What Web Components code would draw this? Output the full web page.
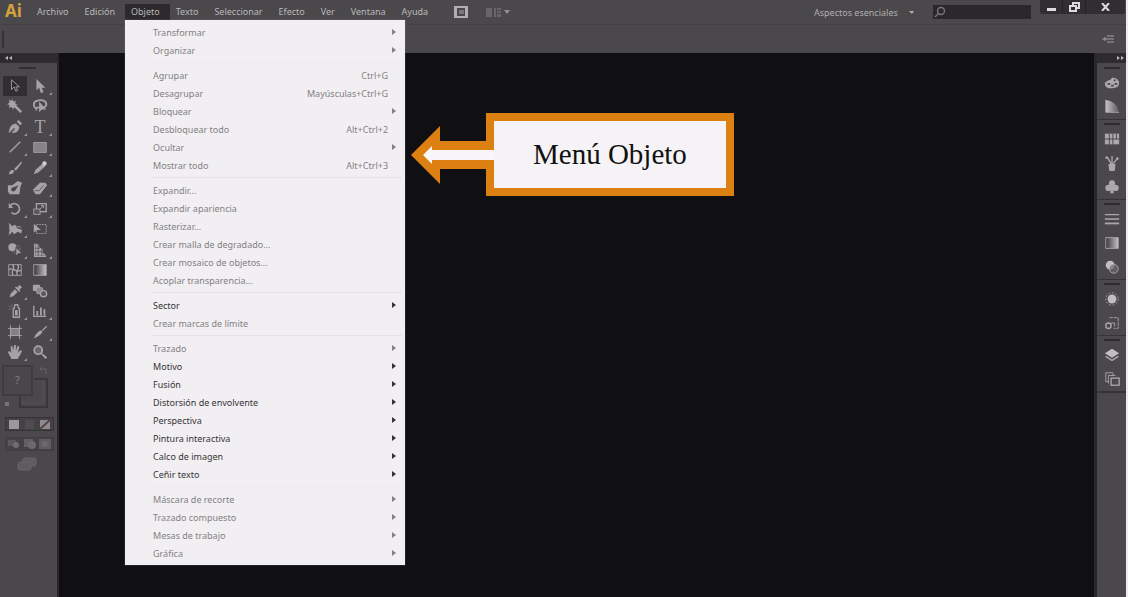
<!DOCTYPE html>
<html lang="es">
<head>
<meta charset="utf-8">
<title>Menú Objeto</title>
<style>
  html, body { margin: 0; }
  body {
    --bar: #4a484b; --bar-dark: #2d2b2e; --ink: #bbb9bc; --icon: #a5a3a6; --canvas: #100f12;
    --menu: #f1eff2; --accent: #dc8011;
    font-family: "Noto Sans", "Open Sans", sans-serif; font-size: 9px; background: var(--canvas); color: var(--ink);
  }
</style>
</head>
<body>
<app-shell>
  <menu-bar slot="menu">
    <menu-title>Archivo</menu-title>
    <menu-title>Edición</menu-title>
    <menu-title open>Objeto
      <menu-list slot="list">
        <menu-command disabled submenu>Transformar</menu-command>
        <menu-command disabled submenu>Organizar</menu-command>
        <menu-rule faint></menu-rule>
        <menu-command disabled shortcut="Ctrl+G">Agrupar</menu-command>
        <menu-command disabled shortcut="Mayúsculas+Ctrl+G">Desagrupar</menu-command>
        <menu-command disabled submenu>Bloquear</menu-command>
        <menu-command disabled shortcut="Alt+Ctrl+2">Desbloquear todo</menu-command>
        <menu-command disabled submenu>Ocultar</menu-command>
        <menu-command disabled shortcut="Alt+Ctrl+3">Mostrar todo</menu-command>
        <menu-rule></menu-rule>
        <menu-command disabled>Expandir...</menu-command>
        <menu-command disabled>Expandir apariencia</menu-command>
        <menu-command disabled>Rasterizar...</menu-command>
        <menu-command disabled>Crear malla de degradado...</menu-command>
        <menu-command disabled>Crear mosaico de objetos...</menu-command>
        <menu-command disabled>Acoplar transparencia...</menu-command>
        <menu-rule></menu-rule>
        <menu-command submenu>Sector</menu-command>
        <menu-command disabled>Crear marcas de límite</menu-command>
        <menu-rule></menu-rule>
        <menu-command disabled submenu>Trazado</menu-command>
        <menu-command submenu>Motivo</menu-command>
        <menu-command submenu>Fusión</menu-command>
        <menu-command submenu>Distorsión de envolvente</menu-command>
        <menu-command submenu>Perspectiva</menu-command>
        <menu-command submenu>Pintura interactiva</menu-command>
        <menu-command submenu>Calco de imagen</menu-command>
        <menu-command submenu>Ceñir texto</menu-command>
        <menu-rule faint></menu-rule>
        <menu-command disabled submenu>Máscara de recorte</menu-command>
        <menu-command disabled submenu>Trazado compuesto</menu-command>
        <menu-command disabled submenu>Mesas de trabajo</menu-command>
        <menu-command disabled submenu>Gráfica</menu-command>
      </menu-list>
    </menu-title>
    <menu-title>Texto</menu-title>
    <menu-title>Seleccionar</menu-title>
    <menu-title>Efecto</menu-title>
    <menu-title>Ver</menu-title>
    <menu-title>Ventana</menu-title>
    <menu-title>Ayuda</menu-title>
  </menu-bar>
  <control-bar slot="control"></control-bar>
  <tool-palette slot="tools"></tool-palette>
  <note-arrow>Menú Objeto</note-arrow>
  <panel-dock slot="panels"></panel-dock>
</app-shell>

<script>
const define = (name, html) => customElements.define(name, class extends HTMLElement {
  constructor() {
    super();
    this.attachShadow({ mode: "open" });
  }
  connectedCallback() {
    if (this.shadowRoot.firstChild) return;
    const t = document.createElement("template");
    t.innerHTML = "<style>*{box-sizing:border-box}button{font:inherit;color:inherit;background:none;border:0;padding:0;margin:0}svg{display:block}</style>" + (typeof html === "function" ? html(this) : html);
    this.shadowRoot.append(t.content.cloneNode(true));
  }
});

/* Glyphs on an 18 by 18 grid; fill and stroke come from the host colour. */
const S = 'fill="none" stroke="currentColor"';
const icons = {
  select: `<path d="M5 2v11l3-3 2 5 2-1-2-4h4z" fill="#29272a" stroke="currentColor"/>`,
  direct: `<path d="M5 1v13l3-3 2 6 3-1-2-5h4z"/>`,
  wand: `<path d="M6 1l1 3 3-1-1 3 3 1-2 1 7 7-2 2-7-7-1 3-2-3-3 1 1-3-3-1 3-2-1-3 3 1z"/>`,
  lasso: `<path d="M5 12C1 10 1 4 6 3c6-2 11 1 10 5-1 3-5 4-8 3-2-1-4 0-3 3" ${S} stroke-width="2"/><path d="M8 4v12l3-3h5z"/>`,
  pen: `<path d="M2 16c1-5 1-8 5-10l3-1 4 4-1 3c-2 4-5 3-8 4l4-5-1-1z"/><path d="M11 3l2-2 4 4-2 2z"/>`,
  line: `<path d="M3 15L15 3" ${S} stroke-width="1.5"/>`,
  rect: `<rect x="2" y="4" width="14" height="11" fill="#858386" stroke="currentColor"/>`,
  brush: `<path d="M2 16c1-4 3-6 6-4 0 3-3 4-6 4zM8 10l8-8 1 1-7 9z"/>`,
  pencil: `<path d="M2 16l2-5 8-7 3 3-8 7z"/><circle cx="14" cy="4" r="2.5" fill="#d0ced1"/>`,
  blob: `<path d="M1 6h5l6-5 5 2-2 5-1 8H3l-2-3zm4 3c-1 3 1 5 4 3l4-6z" fill-rule="evenodd"/>`,
  eraser: `<path d="M1 11L9 3h6l2 3-8 10H4z"/><path d="M3 12h5l5-6" fill="none" stroke="#59575a"/>`,
  rotate: `<path d="M4 5c3-4 10-2 10 4 0 5-6 7-9 4" ${S} stroke-width="1.8" /><path d="M2 2v6h5z"/>`,
  scale: `<rect x="5" y="3" width="11" height="9" ${S} stroke-width="1.5"/><rect x="2" y="9" width="7" height="6" fill="#59575a" stroke="currentColor"/><path d="M8 10l5-5v3M13 5h-3" ${S}/>`,
  width: `<path d="M2 2l4 4 3-2 2 4 6 2-1 4-4-2-4 3-2-3-4 4 1-7z"/><path d="M2 8c5 4 7-4 14-1" ${S}/>`,
  free: `<rect x="5" y="4" width="11" height="10" ${S} stroke-dasharray="2 1"/><path d="M2 3v10l4-3h4z"/>`,
  builder: `<circle cx="6" cy="6" r="4.5"/><circle cx="10" cy="8" r="4.5" ${S} stroke-dasharray="1 1"/><path d="M10 6v10l3-3h4z" stroke="#4a484b"/>`,
  persp: `<path d="M3 2v14h13" ${S} stroke-width="1.5"/><path d="M4 2l4 1v3l4 2v4l4 3H4z"/><path d="M7 3v12M11 6v9M3 7h6M3 11h9" fill="none" stroke="#59575a"/>`,
  mesh: `<rect x="2" y="3" width="14" height="12" ${S}/><path d="M2 9c5-5 8 5 14 0M6 3c5 3-3 7 1 12M12 3c4 4-4 7 0 12" ${S} stroke-width="1.5"/>`,
  gradient: `<rect x="2" y="3" width="14" height="12" fill="url(#g)" stroke="currentColor"/>`,
  dropper: `<path d="M3 16l1-4 5-5 3 3-5 5zM9 5l1-1 2 1 2-3 3 3-3 2 1 2-1 1z"/>`,
  blend: `<rect x="1" y="2" width="8" height="7" rx="1"/><rect x="5" y="5" width="7" height="7" rx="2" fill="#8a888b" stroke="currentColor"/><circle cx="13" cy="12" r="3.5" fill="#59575a" stroke="currentColor" stroke-width="1.5"/>`,
  spray: `<path d="M8 6l1-4h3l1 4h1v10H7V6z" ${S} stroke-width="1.5"/><path d="M9 8h3v6H9zM2 3h1v1H2zM4 5h1v1H4zM5 2h1v1H5zM2 7h1v1H2z"/>`,
  graph: `<path d="M2 3v12h14" ${S} stroke-width="1.5"/><path d="M5 9h2v5H5zM9 5h2v9H9zM13 7h2v7h-2z"/>`,
  artboard: `<rect x="4" y="5" width="10" height="8" fill="#838184" stroke="currentColor"/><path d="M4 1v16M14 1v16M1 5h16M1 13h16" ${S}/>`,
  slice: `<path d="M2 16c2-5 5-8 8-9l2 2c-3 4-6 6-10 7z"/><path d="M11 7l5-5 1 1-5 5z"/>`,
  hand: `<path d="M5 17c-1-3-3-5-4-8l2-1 2 2-1-7 2-1 1 6 1-7h2v7l2-6 2 1-2 7 3-3 2 1c-2 4-3 6-5 9z"/>`,
  zoom: `<circle cx="7" cy="7" r="4.5" fill="#69676a" stroke="currentColor" stroke-width="2"/><path d="M11 10l6 5-2 2-5-6z"/>`,
  palette: `<path d="M1 10c0-4 6-3 8-7 4 0 8 2 8 6 0 5-5 6-9 6s-7-2-7-5z"/><path d="M4 10h3M8 12h3M12 10h3M11 6h2" fill="none" stroke="#454346" stroke-width="2"/>`,
  guide: `<path d="M2 1c8 1 14 6 15 14H2z" fill="url(#g2)"/><path d="M2 1v14h15" ${S}/>`,
  swatches: `<path d="M1 3h16v12H1z" /><path d="M1 9h16M6 3v12M10 3v12M14 3v6" fill="none" stroke="#454346"/>`,
  brushes: `<path d="M5 10h8l-1 8H6z"/><path d="M8 10L4 3M9 10V1M10 10l5-6" ${S} stroke-width="1.5"/><circle cx="3" cy="3" r="1.5"/><circle cx="15" cy="4" r="1.5"/>`,
  club: `<circle cx="9" cy="5" r="3.5"/><circle cx="5" cy="10" r="3.5"/><circle cx="13" cy="10" r="3.5"/><path d="M8 8h2l1 8H7z"/>`,
  stroke: `<path d="M1 4h16M1 9h16" ${S} stroke-width="1.5"/><path d="M1 14h16" ${S} stroke-width="2"/>`,
  transp: `<circle cx="7" cy="7" r="5" fill="#c0bec1"/><circle cx="11" cy="11" r="5" fill="#6c6a6d" fill-opacity=".7" stroke="currentColor"/>`,
  appear: `<circle cx="9" cy="9" r="5" fill="#c0bec1"/><circle cx="9" cy="9" r="7" ${S} stroke-dasharray="2 2"/>`,
  styles: `<path d="M6 3h10v12h-5" ${S} stroke-dasharray="4 1"/><circle cx="5" cy="12" r="3" ${S} stroke-width="1.5"/><path d="M8 9h4v4" ${S}/>`,
  layers: `<path d="M9 2l8 5-8 5-8-5z" fill="#c0bec1"/><path d="M3 10l6 4 6-4 2 1-8 5-8-5z"/>`,
  boards: `<path d="M5 12H2V2h8v3" ${S}/><rect x="8" y="8" width="9" height="8" ${S} stroke-width="1.5"/><path d="M5 14V5h8" ${S}/>`
};
const glyph = n => `<svg width="16" height="16" viewBox="0 0 18 18" fill="currentColor" aria-hidden="true"><defs><linearGradient id="g"><stop stop-color="#38363a"/><stop offset="1" stop-color="#c4c2c5"/></linearGradient><linearGradient id="g2"><stop stop-color="#c4c2c5"/><stop offset="1" stop-color="#5a585b"/></linearGradient></defs>${icons[n]}</svg>`;

define("app-shell", `<style>
  :host { display: flex; flex-direction: column; min-height: 100vh; border-right: 2px solid #eeecef; box-sizing: border-box; }
  .work { flex: 1; display: flex; }
  main { flex: 1; position: relative; background: var(--canvas); }
</style>
<slot name="menu"></slot><slot name="control"></slot>
<div class="work"><slot name="tools"></slot><main><slot></slot></main><slot name="panels"></slot></div>`);

define("menu-bar", `<style>
  :host { display: flex; align-items: flex-start; height: 24px; background: var(--bar); position: relative; z-index: 2; }
  .logo { width: 31px; padding-left: 5px; font-size: 17px; line-height: 22px; font-weight: 700; color: #d5a13a; }
  nav { display: flex; padding-top: 4px; }
  .extra { display: flex; align-items: center; gap: 18px; height: 24px; margin-left: 16px; }
  .arrange { display: flex; align-items: center; gap: 2px; color: #747275; }
  .right { display: flex; margin-left: auto; }
  .space { display: flex; align-items: center; height: 24px; gap: 6px; margin-right: 19px; }
  select { appearance: none; border: 0; background: none; font: inherit; color: #b0aeb1; padding: 0; width: 89px; }
  .search { display: flex; align-items: center; width: 98px; height: 14px; margin: 5px 9px 0 0; padding-left: 1px; background: #2a282b; color: #777578; }
  input { flex: 1; min-width: 0; height: 12px; border: 0; padding: 0 2px; background: none; font: inherit; color: inherit; outline: 0; }
  .win { display: flex; height: 14px; margin-right: 1px; background: #302e31; color: #dcdadd; border-radius: 0 0 2px 2px; }
  .win button { display: grid; place-items: center; width: 23px; border-right: 1px solid #232124; }
  .win button:last-child { width: 39px; border: 0; }
</style>
<div class="logo">Ai</div>
<nav><slot></slot></nav>
<div class="extra">
  <button aria-label="Bridge"><svg width="14" height="12"><path d="M0 0h14v12H0zM3 2v8h8V2z" fill="#b0aeb1" fill-rule="evenodd"/><rect x="5" y="4" width="5" height="4" fill="#79777a"/></svg></button>
  <button class="arrange" aria-label="Organizar documentos"><svg width="16" height="11" fill="currentColor"><path d="M0 1h6v9H0zM8 1h2v9H8zM11 1h4v2h-4zM11 4h4v2h-4zM11 7h4v3h-4z" opacity=".7"/></svg><svg width="6" height="4" fill="#929093"><path d="M0 0h6L3 4z"/></svg></button>
</div>
<div class="right">
  <div class="space"><select aria-label="Espacio de trabajo"><option>Aspectos esenciales</option></select><svg width="5" height="3" fill="#b0aeb1"><path d="M0 0h5L3 3z"/></svg></div>
  <label class="search"><svg width="12" height="12" fill="none" stroke="currentColor" stroke-width="1.4"><circle cx="7" cy="5" r="3.5"/><path d="M5 7l-4 4"/></svg><input type="search" aria-label="Buscar"></label>
  <div class="win">
    <button aria-label="Minimizar"><svg width="9" height="9"><path d="M0 5h9v3H0z" fill="currentColor"/></svg></button>
    <button aria-label="Restaurar"><svg width="11" height="10" fill="none" stroke="currentColor" stroke-width="2"><path d="M4 3V1h6v5H8"/><rect x="1" y="4" width="6" height="5"/></svg></button>
    <button aria-label="Cerrar"><svg width="9" height="8" stroke="currentColor" stroke-width="2"><path d="M1 0l7 8M8 0L1 8"/></svg></button>
  </div>
</div>`);

define("menu-title", `<style>
  :host { display: block; position: relative; }
  button { display: block; height: 16px; padding: 0 10px 0 6px; line-height: 16px; white-space: nowrap; }
  :host([open]) button { background: #2c2a2d; }
  .drop { position: absolute; left: 0; top: 16px; }
</style>
<button><slot></slot></button><div class="drop"><slot name="list"></slot></div>`);

define("menu-list", `<style>
  :host { display: block; width: 280px; padding: 3px 0; background: var(--menu); color: #353336; box-sizing: border-box; box-shadow: 0 0 1px #8b898c; }
</style><slot></slot>`);

define("menu-command", el => `<style>
  :host { display: block; }
  button { display: flex; align-items: center; width: 100%; height: 18px; padding: 0 9px 0 28px; text-align: left; white-space: nowrap; }
  button:disabled { color: #838184; }
  .label { flex: 1; }
  .keys { margin-right: 8px; }
</style>
<button${el.hasAttribute("disabled") ? " disabled" : ""}><span class="label"><slot></slot></span>${
  el.hasAttribute("shortcut") ? `<span class="keys">${el.getAttribute("shortcut")}</span>` : ""}${
  el.hasAttribute("submenu") ? '<svg width="4" height="6" fill="currentColor"><path d="M0 0l4 3-4 3z"/></svg>' : ""}</button>`);

define("menu-rule", `<style>
  :host { display: block; height: 7px; padding: 3px 3px 3px 27px; box-sizing: border-box; }
  div { height: 1px; background: #e5e3e6; }
  :host([faint]) div { background: #edebee; }
</style><div></div>`);

define("control-bar", `<style>
  :host { display: flex; align-items: center; justify-content: space-between; height: 29px; padding: 0 12px 0 2px; box-sizing: border-box; background: var(--bar); border-top: 1px solid #434144; }
  .grip { width: 2px; height: 17px; background: #343235; }
</style>
<div class="grip"></div>
<button aria-label="Opciones del panel"><svg width="12" height="8" fill="none" stroke="#a09ea1"><path d="M5 1h7M5 4h7M5 7h7M0 4h5M3 2v4"/></svg></button>`);

define("tool-button", el => `<style>
  :host { display: block; }
  button { position: relative; display: grid; place-items: center; width: 24px; height: 20px; color: var(--icon); }
  :host([active]) button { background: #302e31; }
  :host([more]) button::after { content: ""; position: absolute; right: 0; bottom: 1px; width: 3px; height: 3px; background: #98969a; clip-path: polygon(100% 0, 100% 100%, 0 100%); }
  .type { font: 18px/20px "Liberation Serif", serif; }
</style><button aria-label="${el.getAttribute("label")}">${el.getAttribute("icon") === "type" ? '<span class="type">T</span>' : glyph(el.getAttribute("icon"))}</button>`);

const tools = [
  ["select:Selección", "direct:Selección directa+", "wand:Varita mágica", "lasso:Lazo"],
  ["pen:Pluma+", "type:Texto+", "line:Segmento de línea+", "rect:Rectángulo+"],
  ["brush:Pincel", "pencil:Lápiz+", "blob:Pincel de manchas", "eraser:Borrador+"],
  ["rotate:Rotar+", "scale:Escala+", "width:Anchura+", "free:Transformación libre"],
  ["builder:Creador de formas+", "persp:Perspectiva+", "mesh:Malla", "gradient:Degradado"],
  ["dropper:Cuentagotas+", "blend:Fusión", "spray:Rociar símbolos+", "graph:Gráfica+"],
  ["artboard:Mesa de trabajo", "slice:Sector+", "hand:Mano+", "zoom:Zoom"]
];
const toolTag = (s, i, j) => {
  const [icon, label] = s.replace("+", "").split(":");
  return `<tool-button icon="${icon}" label="${label}"${s.endsWith("+") ? " more" : ""}${i + j === 0 ? " active" : ""}></tool-button>`;
};

define("tool-palette", `<style>
  :host { display: flex; flex-direction: column; width: 59px; box-sizing: border-box; background: var(--bar); border-right: 2px solid #29272a; }
  .head { height: 10px; padding: 3px 5px; background: var(--bar-dark); box-sizing: border-box; }
  .grip { width: 17px; height: 2px; margin: 4px 0 7px 19px; background: #302e31; }
  .groups { display: flex; flex-direction: column; gap: 1px; padding-left: 3px; }
  .group { display: grid; grid-template-columns: 24px 24px; column-gap: 1px; }
  .paint { margin: 3px 0 0 2px; }
  .row { display: flex; align-items: center; justify-content: space-between; width: 49px; margin: 6px 0 0 5px; padding: 0 3px; height: 14px; background: #434144; border: 1px solid #363437; }
  .row.modes { padding: 0 2px; border-color: #403e41; }
  .screen { display: block; margin: 6px 0 0 17px; }
</style>
<div class="head"><svg width="7" height="4" fill="#bbb9bc"><path d="M3 0v4L0 2zM7 0v4L4 2z"/></svg></div>
<div class="grip"></div>
<div class="groups">${tools.map((g, i) => `<div class="group">${g.map((s, j) => toolTag(s, i, j)).join("")}</div>`).join("")}</div>
<svg class="paint" width="48" height="46" fill="none">
  <path d="M18 30v12h27V14H32" stroke="#39373a" stroke-width="2"/><path d="M20 32v6h21V16" stroke="#525053"/>
  <rect x="1" y="1" width="29" height="29" fill="#49474a" stroke="#3e3c3f" stroke-width="2"/>
  <text x="13" y="19" fill="#858386" font-size="11" font-family="Open Sans, sans-serif">?</text>
  <path d="M38 4h6v5M38 4l2-2M38 4l2 2" stroke="#656366"/><rect x="3" y="37" width="4" height="4" fill="#77757a"/>
</svg>
<div class="row">
  <button aria-label="Color"><svg width="10" height="9"><path d="M0 0h10v9H0z" fill="#9b999c"/></svg></button>
  <button aria-label="Degradado"><svg width="9" height="9"><path d="M0 0h9v9H0z" fill="#4e4c4f"/></svg></button>
  <button aria-label="Ninguno"><svg width="10" height="9"><path d="M0 0h10v9H0z" fill="#8d8b8e"/><path d="M0 9l10-9" stroke="#593f44" stroke-width="2"/></svg></button>
</div>
<div class="row modes">
  <button aria-label="Dibujo normal"><svg width="12" height="10" fill="#5a585b"><rect y="1" width="8" height="6"/><circle cx="8" cy="6" r="3" fill="#6f6d70"/></svg></button>
  <button aria-label="Dibujar detrás"><svg width="12" height="10" fill="#626063"><rect width="9" height="8"/><circle cx="8" cy="6" r="4" fill="#6b696c"/></svg></button>
  <button aria-label="Dibujar dentro"><svg width="12" height="10" fill="#5f5d60"><rect width="12" height="10"/><circle cx="6" cy="5" r="3" fill="#6b696c"/></svg></button>
</div>
<button class="screen" aria-label="Modo de pantalla"><svg width="20" height="15" fill="#5e5c5f" stroke="#676568"><rect x="6" y="1" width="13" height="8" rx="2"/><rect x="1" y="5" width="13" height="8" rx="2"/></svg></button>`);

const panels = [
  ["palette:Color", "guide:Guía de color"],
  ["swatches:Muestras", "brushes:Pinceles", "club:Símbolos"],
  ["stroke:Trazo", "gradient:Degradado", "transp:Transparencia"],
  ["appear:Apariencia", "styles:Estilos gráficos"],
  ["layers:Capas", "boards:Mesas de trabajo"]
];
define("panel-dock", `<style>
  :host { display: block; width: 32px; box-sizing: border-box; background: var(--bar); border-left: 3px solid #29272a; }
  .head { display: flex; justify-content: flex-end; height: 10px; padding: 3px 2px; background: var(--bar-dark); }
  .dock { padding-top: 1px; }
  .group { padding-top: 3px; border-bottom: 1px solid #353336; }
  .group:last-child { border-bottom-width: 2px; }
  .grip { width: 16px; height: 2px; margin: 0 auto 2px; background: #2d2b2e; }
  .group button { display: grid; place-items: center; width: 100%; height: 24px; padding-left: 1px; color: #aaa8ab; }
</style>
<div class="head"><svg width="7" height="4" fill="#bbb9bc"><path d="M0 0v4l3-2zM4 0v4l3-2z"/></svg></div>
<div class="dock">${panels.map(g => `<div class="group"><div class="grip"></div>${g.map(s => { const [i, l] = s.split(":"); return `<button aria-label="${l}">${glyph(i)}</button>`; }).join("")}</div>`).join("")}</div>`);

define("note-arrow", `<style>
  :host { position: absolute; left: 352px; top: 60px; display: flex; align-items: center; }
  svg { position: relative; margin-right: -9px; }
  .box { padding: 14px 39px; border: 8px solid var(--accent); background: #f5f3f6; color: #111; font: 29px/39px "Liberation Serif", serif; white-space: nowrap; }
</style>
<svg width="84" height="58"><path d="M0 29L29 0v15h46v28H29v15z" fill="#dc8011"/><path d="M12 29l9-9v4h63v10H21v4z" fill="#f8f6f9"/></svg>
<div class="box"><slot></slot></div>`);
</script>
</body>
</html>
